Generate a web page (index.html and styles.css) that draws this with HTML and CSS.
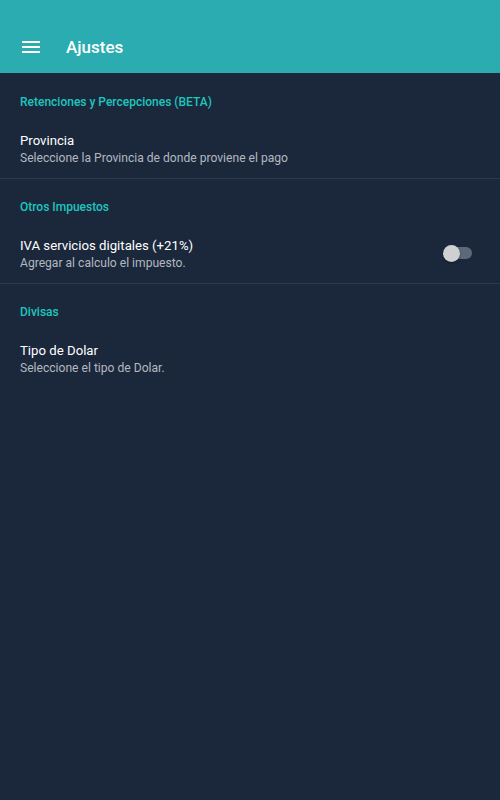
FILE: index.html
```html
<!DOCTYPE html>
<html>
<head>
<meta charset="utf-8">
<link rel="stylesheet" href="styles.css">
</head>
<body>
<header class="appbar">
  <svg class="menu" width="18" height="12" viewBox="0 0 18 12"><rect x="0" y="0" width="18" height="2" fill="#fff"/><rect x="0" y="5" width="18" height="2" fill="#fff"/><rect x="0" y="10" width="18" height="2" fill="#fff"/></svg>
  <h1 class="title">Ajustes</h1>
</header>
<main>
  <section class="group">
    <div class="group-title">Retenciones y Percepciones (BETA)</div>
    <div class="item">
      <div class="texts">
        <div class="item-title">Provincia</div>
        <div class="item-sub">Seleccione la Provincia de donde proviene el pago</div>
      </div>
    </div>
  </section>
  <section class="group">
    <div class="group-title">Otros Impuestos</div>
    <div class="item">
      <div class="texts">
        <div class="item-title">IVA servicios digitales (+21%)</div>
        <div class="item-sub">Agregar al calculo el impuesto.</div>
      </div>
      <div class="switch"><div class="track"></div><div class="thumb"></div></div>
    </div>
  </section>
  <section class="group last">
    <div class="group-title">Divisas</div>
    <div class="item">
      <div class="texts">
        <div class="item-title">Tipo de Dolar</div>
        <div class="item-sub">Seleccione el tipo de Dolar.</div>
      </div>
    </div>
  </section>
</main>
</body>
</html>
```
FILE: styles.css
```css
html, body { margin: 0; padding: 0; }
body {
  background: #1b283b;
  font-family: Roboto, "Noto Sans", sans-serif;
  width: 500px;
  height: 800px;
  overflow: hidden;
}
.appbar {
  height: 73px;
  background: #2aacb0;
  display: flex;
  align-items: flex-end;
  padding: 0 0 0 22px;
  box-sizing: border-box;
}
.menu { margin-bottom: 20px; display: block; }
.title {
  margin: 0 0 0 26px;
  font-size: 17px;
  font-weight: 500;
  color: #fff;
  line-height: 20px;
  padding-bottom: 16px;
}
.group { box-shadow: 0 1px 0 #2c394b; }
.group.last { box-shadow: none; }
.group-title {
  color: #1ec6bf;
  font-size: 12px;
  font-weight: 500;
  line-height: 16px;
  padding: 21px 20px 0;
}
.item {
  display: flex;
  align-items: center;
  padding: 20px 28px 12px 20px;
}
.texts { flex: 1; }
.item-title {
  color: #ffffff;
  font-size: 13.2px;
  line-height: 20px;
  padding-top: 1px;
  margin-bottom: -1px;
}
.item-sub {
  color: #b3b8c0;
  font-size: 12.1px;
  line-height: 16px;
}
.switch { position: relative; width: 29px; height: 17px; }
.track {
  position: absolute; left: 3px; top: 2.5px; width: 26px; height: 12px;
  border-radius: 6px; background: #5d6878;
}
.thumb {
  position: absolute; left: 0; top: 0; width: 17px; height: 17px;
  border-radius: 50%; background: #cfd0d2;
  box-shadow: 0 1px 2px rgba(0,0,0,0.4);
}
```
